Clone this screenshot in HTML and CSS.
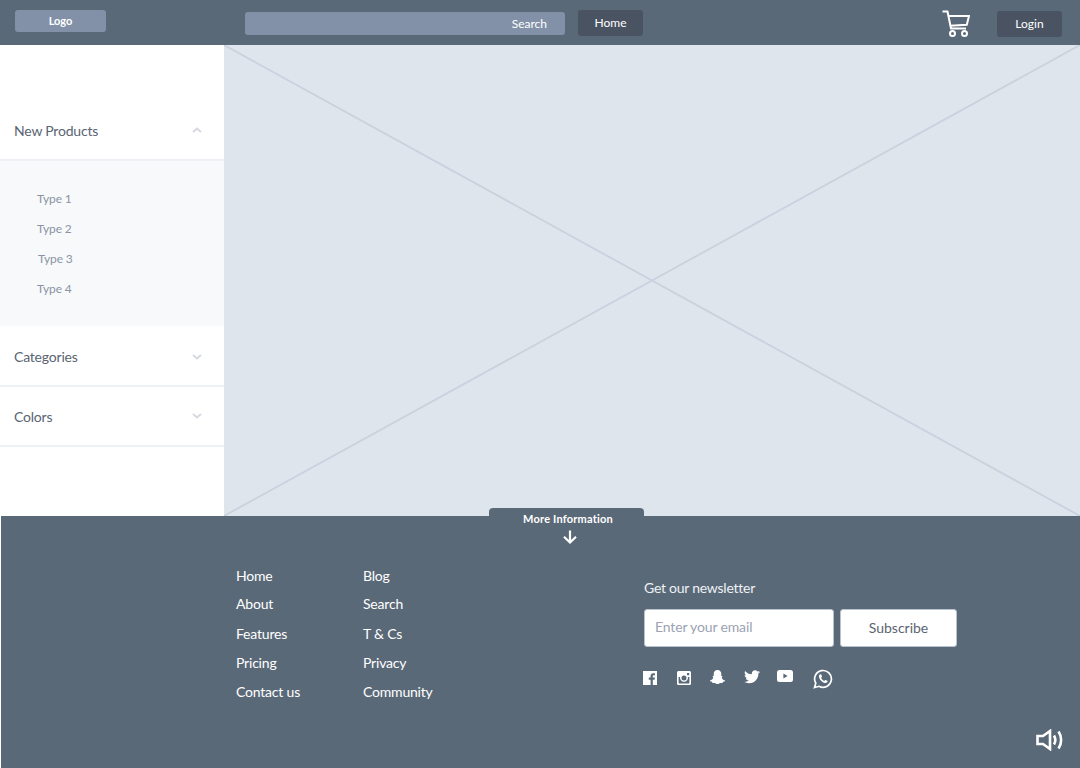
FILE: index.html
```html
<!DOCTYPE html>
<html lang="en">
<head>
    <meta charset="UTF-8">
    <meta name="viewport" content="width=device-width, initial-scale=1.0">
    <title>Store wireframe</title>
    <link rel="stylesheet" href="styles.css">
</head>
<body>

    <header class="topbar">
        <a class="logo">Logo</a>
        <div class="search"><span>Search</span></div>
        <a class="btn-dark btn-home">Home</a>
        <svg class="cart" viewBox="0 0 28 28" fill="none" stroke="#fff" stroke-width="2">
            <path d="M0.5 1.5H5.5L9 18.5H24"/>
            <path d="M6.3 6H27L24.8 14.8L8 15.8"/>
            <circle cx="10.5" cy="23.5" r="2.5"/>
            <circle cx="22.5" cy="23.5" r="2.5"/>
        </svg>
        <a class="btn-dark btn-login">Login</a>
    </header>

    <main class="content">
        <aside class="sidebar">
            <div class="menu-row">
                <span>New Products</span>
                <svg class="chevron" viewBox="0 0 10 6"><path d="M1 5L5 1.5L9 5"/></svg>
            </div>
            <ul class="submenu">
                <li>Type 1</li>
                <li>Type 2</li>
                <li class="nudge">Type 3</li>
                <li>Type 4</li>
            </ul>
            <div class="menu-row menu-row-tall">
                <span>Categories</span>
                <svg class="chevron" viewBox="0 0 10 6"><path d="M1 1L5 4.5L9 1"/></svg>
            </div>
            <div class="menu-row">
                <span>Colors</span>
                <svg class="chevron" viewBox="0 0 10 6"><path d="M1 1L5 4.5L9 1"/></svg>
            </div>
        </aside>
        <div class="hero">
            <svg class="hero-lines" viewBox="0 0 856 471" preserveAspectRatio="none">
                <line x1="0" y1="0" x2="856" y2="471"/>
                <line x1="856" y1="0" x2="0" y2="471"/>
            </svg>
        </div>
    </main>

    <footer class="footer">
        <div class="more-tab">
            <span>More Information</span>
            <svg class="more-arrow" viewBox="0 0 16 14" fill="none" stroke="#fff" stroke-width="2.2">
                <path d="M8 0.5V12.5M2 6.8L8 12.5L14 6.8"/>
            </svg>
        </div>

        <ul class="links links-a">
            <li>Home</li>
            <li class="tight">About</li>
            <li>Features</li>
            <li>Pricing</li>
            <li>Contact us</li>
        </ul>
        <ul class="links links-b">
            <li>Blog</li>
            <li class="tight">Search</li>
            <li>T &amp; Cs</li>
            <li>Privacy</li>
            <li>Community</li>
        </ul>

        <div class="newsletter">
            <h4>Get our newsletter</h4>
            <form class="news-form">
                <input type="text" placeholder="Enter your email">
                <button type="button">Subscribe</button>
            </form>
            <div class="social">
                <svg class="ico-fb" viewBox="0 0 14 14">
                    <path fill="#fff" d="M0 0H14V14H9.8V8.7H11.6L11.9 6.6H9.8V5.3C9.8 4.7 10 4.3 10.9 4.3H12V2.4C11.6 2.3 11 2.3 10.3 2.3C8.7 2.3 7.6 3.3 7.6 5V6.6H5.8V8.7H7.6V14H0Z"/>
                </svg>
                <svg class="ico-ig" viewBox="0 0 14 14">
                    <path fill="#fff" fill-rule="evenodd" d="M1.5 0H12.5A1.5 1.5 0 0 1 14 1.5V12.5A1.5 1.5 0 0 1 12.5 14H1.5A1.5 1.5 0 0 1 0 12.5V1.5A1.5 1.5 0 0 1 1.5 0ZM10 2V4.2H12.2V2ZM1.6 5.9V12A.4 .4 0 0 0 2 12.4H12A.4 .4 0 0 0 12.4 12V5.9H10.9A4 4 0 1 1 3.1 5.9ZM7 4.5A2.5 2.5 0 1 0 7 9.5A2.5 2.5 0 1 0 7 4.5Z"/>
                </svg>
                <svg class="ico-snap" viewBox="0 0 15 14">
                    <path fill="#fff" d="M7.5 0C10 0 11.3 1.8 11.3 4V6L12.6 6.2L11.7 7.4C12 8.8 13.4 10 15 10.4V11.2L13 11.8L12.5 13L10.4 12.9C9.2 13.2 8.6 14 7.5 14C6.4 14 5.8 13.2 4.6 12.9L2.5 13L2 11.8L0 11.2V10.4C1.6 10 3 8.8 3.3 7.4L2.4 6.2L3.7 6V4C3.7 1.8 5 0 7.5 0Z"/>
                </svg>
                <svg class="ico-tw" viewBox="0 0 24 20">
                    <path fill="#fff" d="M24 2.4c-.9.4-1.8.7-2.8.8 1-.6 1.8-1.6 2.2-2.7-1 .6-2 1-3.1 1.2C19.3.7 18 0 16.6 0c-2.7 0-4.9 2.2-4.9 4.9 0 .4 0 .8.1 1.1C7.7 5.8 4.1 3.9 1.7.9c-.4.7-.7 1.6-.7 2.5 0 1.7.9 3.2 2.2 4.1-.8 0-1.6-.2-2.2-.6v.1c0 2.4 1.7 4.4 3.9 4.8-.7.2-1.5.2-2.2.1.6 2 2.4 3.4 4.6 3.4C5.6 16.5 3.4 17.4 1.2 17.4c-.4 0-.8 0-1.2-.1 2.2 1.4 4.7 2.2 7.5 2.2 9.1 0 14-7.5 14-14v-.6c1-.7 1.8-1.6 2.5-2.5z"/>
                </svg>
                <svg class="ico-yt" viewBox="0 0 16 12">
                    <path fill="#fff" fill-rule="evenodd" d="M2.5 0H13.5A2.5 2.5 0 0 1 16 2.5V9.5A2.5 2.5 0 0 1 13.5 12H2.5A2.5 2.5 0 0 1 0 9.5V2.5A2.5 2.5 0 0 1 2.5 0ZM6.4 3.4V8.6L10.6 6Z"/>
                </svg>
                <svg class="ico-wa" viewBox="0 0 20 20">
                    <path fill="none" stroke="#fff" stroke-width="1.7" d="M1.5 18.5L2.8 14.2A8.4 8.4 0 1 1 6 17.3Z"/>
                    <path fill="#fff" d="M7.3 5.3C6.4 5.6 5.7 6.6 6 8C6.5 10.6 9.3 13.5 12 14C13.4 14.2 14.4 13.5 14.6 12.6C14.7 12.2 14.6 12 14.3 11.8L12.6 11C12.3 10.9 12.1 11 11.9 11.2L11.3 11.9C10 11.4 8.6 10 8.1 8.7L8.8 8C9 7.8 9 7.6 8.9 7.3L8.2 5.6C8 5.3 7.7 5.2 7.3 5.3Z"/>
                </svg>
            </div>
        </div>

        <svg class="sound" viewBox="0 0 28 22" fill="none" stroke="#fff" stroke-width="2.6">
            <path d="M1.5 7H7L14 2V20L7 15H1.5Z"/>
            <path d="M18 6.5C19.6 9.2 19.6 12.8 18 15.5"/>
            <path d="M22.5 2.5C26 7.5 26 14.5 22.5 19.5"/>
        </svg>
    </footer>

</body>
</html>
```

FILE: styles.css
```css
* {
    box-sizing: border-box;
}

body {
    margin: 0;
    width: 1080px;
    height: 768px;
    overflow: hidden;
    background-color: #fff;
    font-family: Lato, "Open Sans", sans-serif;
}

ul {
    list-style: none;
    margin: 0;
    padding: 0;
}

/* Barra superior */
.topbar {
    display: flex;
    align-items: flex-start;
    height: 45px;
    padding-left: 15px;
    background-color: #5a6978;
    color: #fff;
    font-size: 12px;
}

.logo {
    width: 91px;
    height: 22px;
    margin-top: 10px;
    border-radius: 3px;
    background-color: #8291a8;
    font-weight: 700;
    font-size: 11px;
    line-height: 22px;
    text-align: center;
}

.search {
    width: 320px;
    height: 23px;
    margin-top: 12px;
    margin-left: 139px;
    padding-right: 18px;
    border-radius: 3px;
    background-color: #8291a8;
    line-height: 24px;
    text-align: right;
}

.btn-dark {
    height: 26px;
    border-radius: 3px;
    background-color: #4a5361;
    line-height: 26px;
    text-align: center;
}

.btn-home {
    width: 65px;
    margin-top: 10px;
    margin-left: 13px;
}

.cart {
    width: 28px;
    height: 28px;
    margin-top: 10px;
    margin-left: 299px;
}

.btn-login {
    width: 65px;
    margin-top: 11px;
    margin-left: 27px;
}

/* Contenido */
.content {
    display: flex;
    height: 471px;
}

.sidebar {
    width: 224px;
    padding-top: 56px;
    flex-shrink: 0;
}

.menu-row {
    display: flex;
    justify-content: space-between;
    align-items: center;
    height: 60px;
    padding: 0 22px 0 14px;
    border-bottom: 2px solid #edf0f4;
    color: #5a6472;
    font-size: 14px;
    letter-spacing: -0.2px;
}

.menu-row-tall {
    height: 61px;
    padding-top: 2px;
}

.chevron {
    width: 10px;
    height: 6px;
    fill: none;
    stroke: #d5d9df;
    stroke-width: 2;
}

.submenu {
    height: 165px;
    padding: 23px 0 0 37px;
    background-color: #f7f9fb;
    color: #8b93a3;
    font-size: 12px;
    letter-spacing: -0.1px;
}

.submenu li {
    height: 30px;
    line-height: 30px;
}

.submenu .nudge {
    padding-left: 1px;
}

.hero {
    flex: 1;
    background-color: #dfe5ed;
}

.hero-lines {
    display: block;
    width: 100%;
    height: 100%;
    stroke: #c9d2df;
    stroke-width: 1.8;
}

/* Pie de pagina */
.footer {
    position: relative;
    display: flex;
    align-items: flex-start;
    height: 252px;
    margin-left: 1px;
    padding-left: 235px;
    background-color: #5a6978;
    color: #fff;
}

.more-tab {
    position: absolute;
    top: -8px;
    left: 488px;
    width: 155px;
    height: 40px;
    border-radius: 4px 4px 0 0;
    background-color: #5a6978;
    font-weight: 700;
    font-size: 11px;
    letter-spacing: 0.2px;
    text-align: center;
}

.more-tab span {
    display: block;
    padding: 3px 0 0 3px;
    line-height: 15px;
}

.more-arrow {
    display: block;
    width: 16px;
    height: 14px;
    margin: 4px 0 0 73px;
}

.links {
    padding-top: 45px;
    font-size: 14px;
    letter-spacing: -0.2px;
}

.links li {
    height: 29px;
    line-height: 29px;
}

.links .tight {
    line-height: 27px;
}

.links-a {
    width: 127px;
}

.links-b {
    width: 281px;
}

.newsletter {
    padding-top: 63px;
}

.newsletter h4 {
    margin: 0;
    font-weight: 400;
    font-size: 14px;
    letter-spacing: -0.25px;
    line-height: 18px;
    color: #eef1f4;
}

.news-form {
    display: flex;
    gap: 6px;
    margin-top: 12px;
}

.news-form input {
    width: 190px;
    height: 38px;
    padding: 0 10px 4px;
    border: 1px solid #b9c2cf;
    border-radius: 3px;
    font-family: inherit;
    font-size: 14px;
    letter-spacing: -0.15px;
}

.news-form input::placeholder {
    color: #9aa3b2;
    opacity: 1;
}

.news-form button {
    width: 117px;
    height: 38px;
    padding: 0 0 2px;
    border: 1px solid #b9c2cf;
    border-radius: 3px;
    background-color: #fff;
    color: #5a6472;
    font-family: inherit;
    font-size: 14px;
}

.social {
    display: flex;
    align-items: flex-start;
    margin-top: 21px;
    margin-left: -1px;
}

.ico-fb,
.ico-ig {
    width: 14px;
    height: 14px;
    margin-top: 3px;
}

.ico-ig {
    margin-left: 20px;
}

.ico-snap {
    width: 15px;
    height: 14px;
    margin-top: 2px;
    margin-left: 19px;
}

.ico-tw {
    width: 16px;
    height: 14px;
    margin-top: 2px;
    margin-left: 19px;
}

.ico-yt {
    width: 16px;
    height: 12px;
    margin-top: 2px;
    margin-left: 17px;
}

.ico-wa {
    width: 20px;
    height: 20px;
    margin-left: 20px;
    margin-top: 1px;
}

.sound {
    position: absolute;
    right: 16px;
    bottom: 17px;
    width: 28px;
    height: 22px;
}
```
